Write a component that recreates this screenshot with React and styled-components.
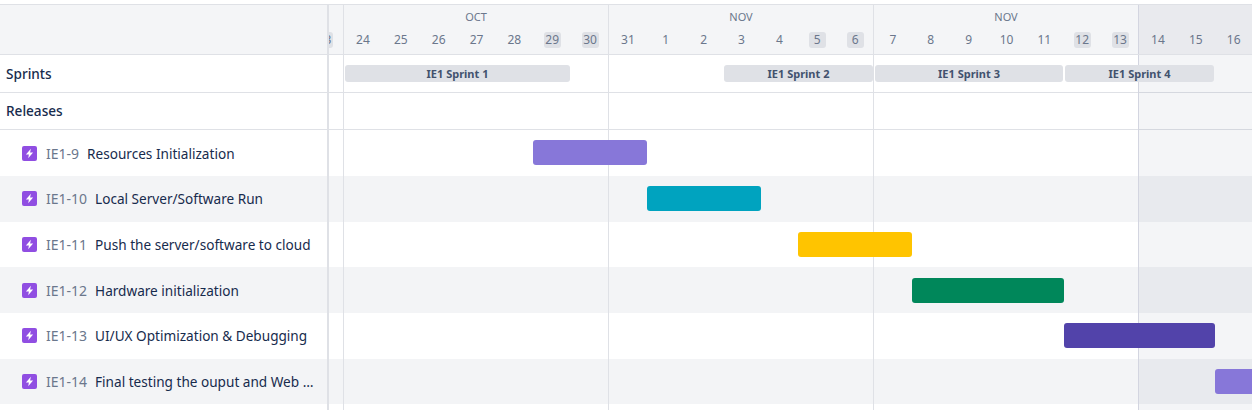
import React from "react";
import styled, { createGlobalStyle } from "styled-components";

const Global = createGlobalStyle`
  html, body { margin: 0; padding: 0; background: #fff; }
  body { font-family: "Noto Sans", "Open Sans", "Liberation Sans", sans-serif; color: #172b4d; }
`;

const LEFT = 327;
const ORIGIN = 329;
const WEEK = 265;

const Page = styled.div`
  width: 1252px;
  height: 410px;
  overflow: hidden;
  padding-top: 4px;
  box-sizing: border-box;
`;
const Header = styled.div`
  display: flex;
  height: 51px;
  box-sizing: border-box;
  background: #f4f5f7;
  border-top: 1px solid #dfe1e6;
  border-bottom: 1px solid #dfe1e6;
`;
const HeaderLeft = styled.div`
  flex: 0 0 ${LEFT}px;
  border-right: 2px solid #dfe1e6;
`;
const Weeks = styled.div`
  display: flex;
  flex: 1;
  min-width: 0;
  overflow: hidden;
`;
const PartialDay = styled.div`
  flex: 0 0 14px;
  overflow: hidden;
  display: flex;
  justify-content: flex-end;
  padding-top: 27px;
  box-sizing: border-box;
`;
const PartialChip = styled.span`
  flex: none;
  margin-right: 10px;
  width: 17px;
  height: 16px;
  border-radius: 3px;
  background: #dfe1e6;
  color: #6b778c;
  font-size: 12px;
  line-height: 16px;
  text-align: center;
`;
const Week = styled.div`
  flex: 0 0 ${WEEK}px;
  min-width: 0;
  box-sizing: border-box;
  border-left: 1px solid ${(p) => (p.$shaded ? "#d3d5e0" : "#dfe1e6")};
  background: ${(p) => (p.$shaded ? "#e9eaee" : "transparent")};
`;
const Month = styled.div`
  height: 27px;
  padding-top: 4px;
  box-sizing: border-box;
  text-align: center;
  font-size: 11px;
  line-height: 16px;
  color: #6b778c;
`;
const Days = styled.div`
  display: grid;
  grid-template-columns: repeat(7, 37.86px);
`;
const Day = styled.div`
  display: flex;
  justify-content: center;
`;
const DayText = styled.span`
  width: 17px;
  height: 16px;
  border-radius: 3px;
  background: ${(p) => (p.$weekend ? "#dfe1e6" : "transparent")};
  color: #6b778c;
  font-size: 12px;
  line-height: 16px;
  text-align: center;
`;
const Body = styled.div`
  position: relative;
  height: 355px;
`;
const GridOverlay = styled.div`
  position: absolute;
  top: 0;
  bottom: 0;
  left: ${ORIGIN}px;
  right: 0;
  overflow: hidden;
  display: flex;
  padding-left: 14px;
`;
const GridWeek = styled.div`
  flex: 0 0 ${WEEK}px;
  box-sizing: border-box;
  border-left: 1px solid ${(p) => (p.$shaded ? "#d3d5e0" : "#dfe1e6")};
  background: ${(p) => (p.$shaded ? "rgba(9, 30, 66, 0.045)" : "transparent")};
`;
const Row = styled.div`
  display: flex;
  box-sizing: border-box;
  height: ${(p) => p.$h}px;
  background: ${(p) => (p.$alt ? "#f3f4f6" : "transparent")};
  border-bottom: ${(p) => (p.$line ? "1px solid #dfe1e6" : "none")};
`;
const Cell = styled.div`
  flex: 0 0 ${LEFT + 2}px;
  box-sizing: border-box;
  border-right: 2px solid #dfe1e6;
  display: flex;
  align-items: center;
  min-width: 0;
`;
const GroupLabel = styled.span`
  padding-left: 6px;
  font-size: 13.6px;
  font-weight: 500;
  line-height: 18px;
  color: #172b4d;
`;
const IssueCell = styled(Cell)`
  padding: 0 10px 0 22px;
  gap: 9px;
`;
const Key = styled.span`
  flex: none;
  font-size: 14px;
  color: #6b778c;
`;
const Title = styled.span`
  flex: 1;
  min-width: 0;
  margin-left: -1px;
  font-size: 13.6px;
  white-space: nowrap;
  overflow: hidden;
  text-overflow: ellipsis;
  color: #172b4d;
`;
const Track = styled.div`
  flex: 1;
  min-width: 0;
  display: flex;
  align-items: flex-start;
  overflow: hidden;
  position: relative;
  z-index: 2;
`;
const Sprint = styled.div`
  flex: none;
  height: 17px;
  margin-top: 10px;
  margin-left: ${(p) => p.$gap}px;
  width: ${(p) => p.$w}px;
  border-radius: 3px;
  background: #dfe1e6;
  color: #42526e;
  font-size: 11px;
  font-weight: 700;
  line-height: 17px;
  text-align: center;
`;
const Bar = styled.div`
  flex: none;
  height: 25px;
  margin-top: 10.15px;
  margin-left: ${(p) => p.$x}px;
  width: ${(p) => p.$w}px;
  border-radius: 3px;
  background: ${(p) => p.$color};
`;
const List = styled.div`
  padding-top: 0.3px;
`;

const EpicIcon = () => (
  <svg width="15" height="15" viewBox="0 0 15 15" style={{ flex: "none" }}>
    <rect width="15" height="15" rx="2" fill="#904ee2" />
    <path d="M8.9 2.8 3.9 8.6h3l-.7 3.6 4.9-5.8H8.1z" fill="#fff" />
  </svg>
);

const weeks = [
  { month: "OCT", days: [[24], [25], [26], [27], [28], [29, 1], [30, 1]] },
  { month: "NOV", days: [[31], [1], [2], [3], [4], [5, 1], [6, 1]] },
  { month: "NOV", days: [[7], [8], [9], [10], [11], [12, 1], [13, 1]] },
  { month: "", shaded: true, days: [[14], [15], [16]] },
];

const sprints = [
  { name: "IE1 Sprint 1", gap: 16, w: 225 },
  { name: "IE1 Sprint 2", gap: 154, w: 149 },
  { name: "IE1 Sprint 3", gap: 2, w: 188 },
  { name: "IE1 Sprint 4", gap: 2, w: 149 },
];

const issues = [
  { key: "IE1-9", title: "Resources Initialization", x: 204, w: 114, color: "#8777d9" },
  { key: "IE1-10", title: "Local Server/Software Run", x: 318, w: 114, color: "#00a3bf" },
  { key: "IE1-11", title: "Push the server/software to cloud", x: 469, w: 114, color: "#ffc400" },
  { key: "IE1-12", title: "Hardware initialization", x: 583, w: 152, color: "#00875a" },
  { key: "IE1-13", title: "UI/UX Optimization & Debugging", x: 735, w: 151, color: "#5243aa" },
  { key: "IE1-14", title: "Final testing the ouput and Web Application", x: 886, w: 114, color: "#8777d9" },
];

export default function App() {
  return (
    <Page>
      <Global />
      <Header>
        <HeaderLeft />
        <Weeks>
          <PartialDay>
            <PartialChip>23</PartialChip>
          </PartialDay>
          {weeks.map((w, i) => (
            <Week key={i} $shaded={w.shaded}>
              <Month>{w.month}</Month>
              <Days>
                {w.days.map(([d, weekend]) => (
                  <Day key={d}>
                    <DayText $weekend={weekend}>{d}</DayText>
                  </Day>
                ))}
              </Days>
            </Week>
          ))}
        </Weeks>
      </Header>
      <Body>
        <GridOverlay>
          <GridWeek />
          <GridWeek />
          <GridWeek />
          <GridWeek $shaded />
        </GridOverlay>
        <Row $h={38} $line>
          <Cell>
            <GroupLabel>Sprints</GroupLabel>
          </Cell>
          <Track>
            {sprints.map((s) => (
              <Sprint key={s.name} $gap={s.gap} $w={s.w}>
                {s.name}
              </Sprint>
            ))}
          </Track>
        </Row>
        <Row $h={37} $line>
          <Cell>
            <GroupLabel>Releases</GroupLabel>
          </Cell>
          <Track />
        </Row>
        <List>
          {issues.map((it, i) => (
            <Row key={it.key} $h={45.7} $alt={i % 2 === 1}>
              <IssueCell>
                <EpicIcon />
                <Key>{it.key}</Key>
                <Title>{it.title}</Title>
              </IssueCell>
              <Track>
                <Bar $x={it.x} $w={it.w} $color={it.color} />
              </Track>
            </Row>
          ))}
          <Row $h={6}>
            <Cell />
          </Row>
        </List>
      </Body>
    </Page>
  );
}
